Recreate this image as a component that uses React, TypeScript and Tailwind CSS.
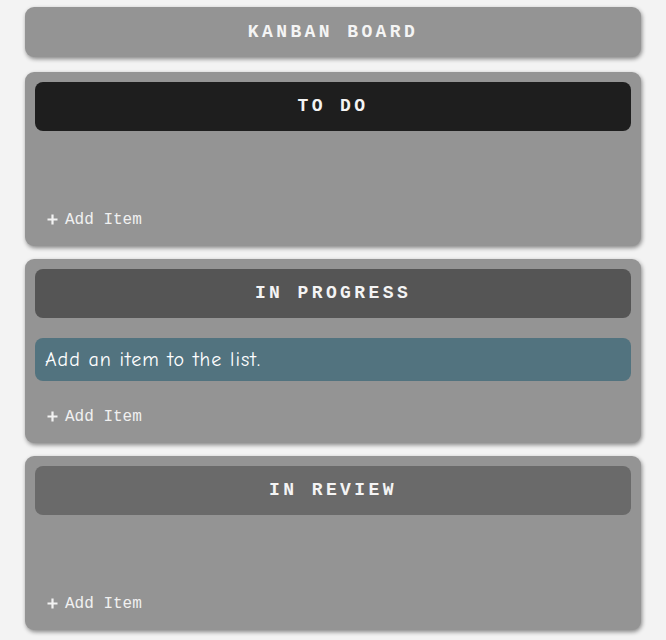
import React from 'react';

const COLUMNS = [
  { id: 'todo', title: 'TO DO', headerBg: 'bg-[#1e1e1e]', items: [] as string[] },
  { id: 'progress', title: 'IN PROGRESS', headerBg: 'bg-[#555555]', items: ['Add an item to the list.'] },
  { id: 'review', title: 'IN REVIEW', headerBg: 'bg-[#6a6a6a]', items: [] as string[] },
];

const mono = { fontFamily: '"Liberation Mono", "Courier New", monospace' };

const PlusIcon = () => (
  <svg width="11" height="11" viewBox="0 0 11 11" className="shrink-0 -mt-[2px]">
    <path d="M5.5 0.5v10M0.5 5.5h10" stroke="#f2f2f2" strokeWidth="2.2" />
  </svg>
);

const Column = ({ title, headerBg, items }: { title: string; headerBg: string; items: string[] }) => {
  return (
    <div className="bg-[#949494] rounded-[9px] p-[10px] pb-[11px] shadow-[1px_2px_4px_rgba(0,0,0,0.45)]">
      <div className={`${headerBg} rounded-[8px] h-[49px] flex items-center justify-center`}>
        <h2 className="text-[18px] font-bold tracking-[3.4px] text-[#f4f4f4]" style={mono}>
          {title}
        </h2>
      </div>
      <div className="min-h-[74px] pt-5 pb-[21px] flex flex-col gap-2">
        {items.map((item) => (
          <div
            key={item}
            className="bg-[#52737f] rounded-[8px] h-[43px] flex items-center px-[10px] text-[20px] tracking-[1px] text-white"
            style={{ fontFamily: '"Comic Sans MS", "Comic Neue", cursive' }}
          >
            {item}
          </div>
        ))}
      </div>
      <button className="flex items-center gap-[7px] h-[30px] px-[12px] text-[16px] text-[#f0f0f0]" style={mono}>
        <PlusIcon />
        Add Item
      </button>
    </div>
  );
};

export default function App() {
  return (
    <div className="min-h-screen bg-[#f3f3f3] px-[25px] pt-[7px] pb-4">
      <div className="flex flex-col gap-[13px]">
        <div className="bg-[#949494] rounded-[9px] h-[50px] flex items-center justify-center shadow-[1px_2px_4px_rgba(0,0,0,0.45)] mb-[2px]">
          <h1 className="text-[18px] font-bold tracking-[3.4px] text-[#f4f4f4]" style={mono}>
            KANBAN BOARD
          </h1>
        </div>
        {COLUMNS.map((col) => (
          <Column key={col.id} title={col.title} headerBg={col.headerBg} items={col.items} />
        ))}
      </div>
    </div>
  );
}
